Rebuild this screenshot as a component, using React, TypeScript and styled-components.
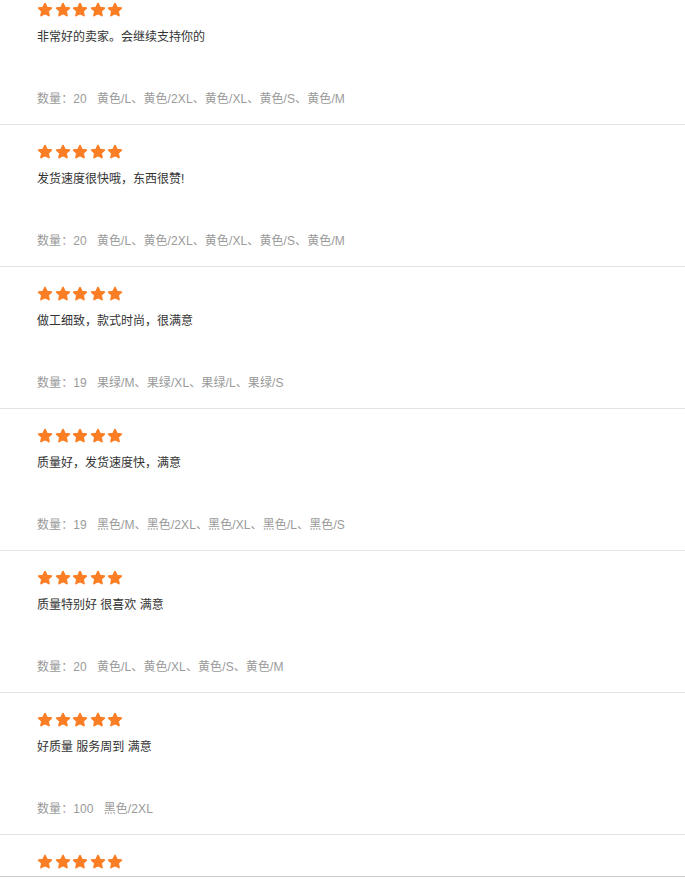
import React from 'react'
import styled, { createGlobalStyle } from 'styled-components'

const GlobalStyle = createGlobalStyle`
    html, body {
        margin: 0;
        padding: 0;
        background: #FFFFFF;
    }
    body {
        font-family: Arial, "Liberation Sans", "Noto Sans CJK SC", sans-serif;
        font-size: 12px;
    }
`

/* styled elements */
const Page = styled.div`
    height: 877px;
    overflow: hidden;
    border-bottom: 1px solid #c8c8c8;
    box-sizing: border-box;
`

const ReviewList = styled.ul`
    list-style: none;
    margin: -17px 0 0 0;
    padding: 0;
`

const ReviewItem = styled.li`
    padding: 19px 0 15px 37px;
    border-bottom: 1px solid #e3e3e3;
    display: flex;
    flex-direction: column;
    align-items: flex-start;
`

const Stars = styled.div`
    display: flex;
    gap: 1.5px;
    height: 16px;
`

const Content = styled.p`
    margin: 9px 0 0 0;
    line-height: 20px;
    font-size: 12px;
    color: #333333;
`

const Meta = styled.div`
    margin-top: 42px;
    line-height: 20px;
    font-size: 12px;
    color: #9a9a9a;
    display: flex;
    gap: 10px;
    letter-spacing: 0.1px;
`

const Star = () => (
    <svg width="16" height="16" viewBox="0 0 16 16">
        <path
            d="M8 1.6 L9.9 5.6 L14.3 6.1 L11 9.1 L11.9 13.5 L8 11.3 L4.1 13.5 L5 9.1 L1.7 6.1 L6.1 5.6 Z"
            fill="#fb7e25"
            stroke="#fb7e25"
            strokeWidth="1.8"
            strokeLinejoin="round"
        />
    </svg>
)

const reviews = [
    { text: '非常好的卖家。会继续支持你的', count: 20, spec: '黄色/L、黄色/2XL、黄色/XL、黄色/S、黄色/M' },
    { text: '发货速度很快哦，东西很赞!', count: 20, spec: '黄色/L、黄色/2XL、黄色/XL、黄色/S、黄色/M' },
    { text: '做工细致，款式时尚，很满意', count: 19, spec: '果绿/M、果绿/XL、果绿/L、果绿/S' },
    { text: '质量好，发货速度快，满意', count: 19, spec: '黑色/M、黑色/2XL、黑色/XL、黑色/L、黑色/S' },
    { text: '质量特别好 很喜欢 满意', count: 20, spec: '黄色/L、黄色/XL、黄色/S、黄色/M' },
    { text: '好质量 服务周到 满意', count: 100, spec: '黑色/2XL' },
    { text: '', count: 0, spec: '' },
]

export const App = () => {
    return (
        <>
            <GlobalStyle />
            <Page>
                <ReviewList>
                    { reviews.map((item, index) => (
                        <ReviewItem key={`review ${index}`}>
                            <Stars>
                                { [0, 1, 2, 3, 4].map(i => <Star key={i} />) }
                            </Stars>
                            { item.text && <Content>{ item.text }</Content> }
                            { item.spec && (
                                <Meta>
                                    <span>数量：{ item.count }</span>
                                    <span>{ item.spec }</span>
                                </Meta>
                            ) }
                        </ReviewItem>
                    )) }
                </ReviewList>
            </Page>
        </>
    )
}

export default App
